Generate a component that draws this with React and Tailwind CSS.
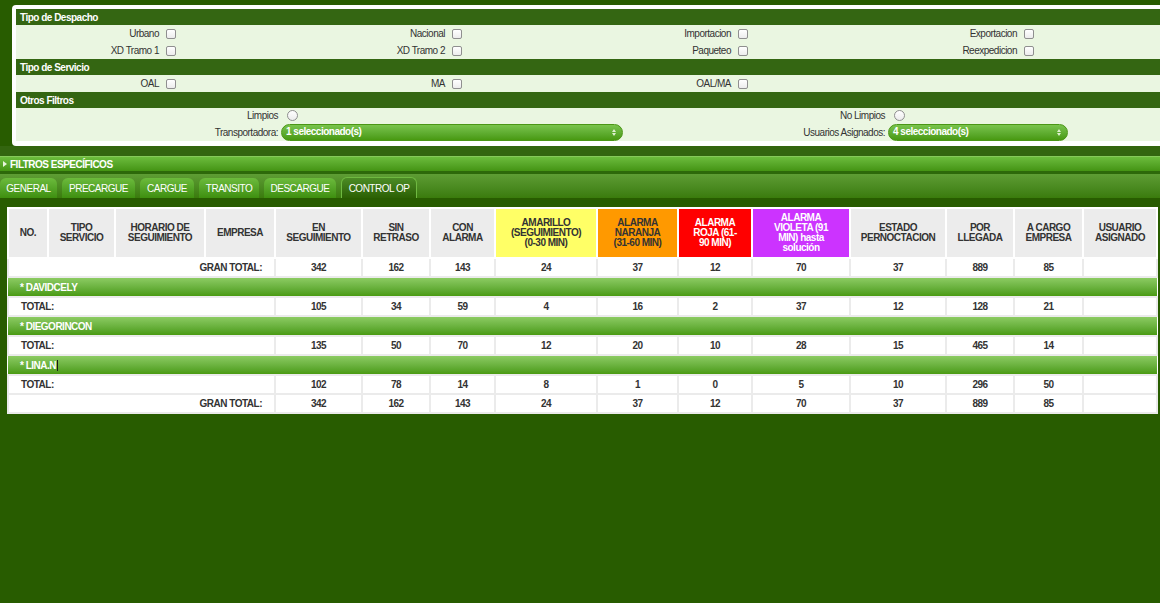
import React from "react";

const font = "font-['Liberation_Sans',Arial,sans-serif]";

const despacho = [
  ["Urbano", "Nacional", "Importacion", "Exportacion"],
  ["XD Tramo 1", "XD Tramo 2", "Paqueteo", "Reexpedicion"],
];

const headers = [
  { w: "w-[40px]", label: ["NO."] },
  { w: "w-[67px]", label: ["TIPO", "SERVICIO"] },
  { w: "w-[90px]", label: ["HORARIO DE", "SEGUIMIENTO"] },
  { w: "w-[70px]", label: ["EMPRESA"] },
  { w: "w-[87px]", label: ["EN", "SEGUIMIENTO"] },
  { w: "w-[68px]", label: ["SIN", "RETRASO"] },
  { w: "w-[65px]", label: ["CON", "ALARMA"] },
  { w: "w-[102px]", label: ["AMARILLO", "(SEGUIMIENTO)", "(0-30 MIN)"], bg: "bg-[#ffff66] text-[#333]" },
  { w: "w-[81px]", label: ["ALARMA", "NARANJA", "(31-60 MIN)"], bg: "bg-[#ff9900] text-[#333]" },
  { w: "w-[74px]", label: ["ALARMA", "ROJA (61-", "90 MIN)"], bg: "bg-[#ff0000] text-white" },
  { w: "w-[98px]", label: ["ALARMA", "VIOLETA (91", "MIN) hasta", "solución"], bg: "bg-[#cc33ff] text-white" },
  { w: "w-[96px]", label: ["ESTADO", "PERNOCTACION"] },
  { w: "w-[68px]", label: ["POR", "LLEGADA"] },
  { w: "w-[69px]", label: ["A CARGO", "EMPRESA"] },
  { w: "w-[74px]", label: ["USUARIO", "ASIGNADO"] },
];

const granTotal = [342, 162, 143, 24, 37, 12, 70, 37, 889, 85, ""];

const groups = [
  { name: "DAVIDCELY", vals: [105, 34, 59, 4, 16, 2, 37, 12, 128, 21, ""] },
  { name: "DIEGORINCON", vals: [135, 50, 70, 12, 20, 10, 28, 15, 465, 14, ""] },
  { name: "LINA.N", vals: [102, 78, 14, 8, 1, 0, 5, 10, 296, 50, ""], caret: true },
];

const tabs = [
  ["GENERAL", "w-[57px]"],
  ["PRECARGUE", "w-[73px]"],
  ["CARGUE", "w-[54px]"],
  ["TRANSITO", "w-[60px]"],
  ["DESCARGUE", "w-[72px]"],
];

const Checkbox = () => (
  <span className="ml-[4px] inline-block w-[10px] h-[10px] rounded-[2px] border border-[#8f8f8f] bg-gradient-to-b from-white to-[#ececec]" />
);

const Radio = () => (
  <span className="ml-[6px] inline-block w-[11px] h-[11px] rounded-full border border-[#8f8f8f] bg-gradient-to-b from-white to-[#ececec]" />
);

const SectionHead = ({ children }) => (
  <div className="h-[16px] bg-[#346612] text-white font-bold text-[10px] tracking-[-0.5px] pl-[4px] flex items-center">
    {children}
  </div>
);

const Select = ({ text, w }) => (
  <div className={`${w} h-[17px] rounded-full border border-[#4b9616] bg-gradient-to-b from-[#79c44c] to-[#48990f] flex items-center justify-between pl-[4px] pr-[6px] text-white font-bold text-[10px] tracking-[-0.5px]`}>
    <span className="-mt-[2px]">{text}</span>
    <svg width="4" height="7" viewBox="0 0 4 7">
      <path d="M2 0 L4 3 L0 3 Z M0 4 L4 4 L2 7 Z" fill="#dff0d0" />
    </svg>
  </div>
);

const td = "border-2 border-[#ebebeb] text-center text-[#333] font-bold text-[10px] tracking-[-0.5px] h-[19px] p-0";

const GroupRow = ({ name, caret }) => (
  <tr>
    <td
      colSpan={15}
      className="h-[20px] p-0 pl-[12px] border-t border-[#3c820e] bg-gradient-to-b from-[#8ccb62] to-[#4a9b10] text-white font-bold text-[10px] tracking-[-0.5px]"
    >
      * {name}
      {caret && <span className="inline-block w-px h-[11px] bg-[#1a1a1a] ml-[1px] align-middle" />}
    </td>
  </tr>
);

const GranRow = () => (
  <tr className="bg-white">
    <td colSpan={4} className={`${td} text-right pr-[12px]`}>GRAN TOTAL:</td>
    {granTotal.map((v, i) => (
      <td key={i} className={td}>{v}</td>
    ))}
  </tr>
);

export default function App() {
  return (
    <div className={`${font} w-full h-[603px] overflow-hidden bg-[#285c00] pt-[5px]`}>
      {/* filtros */}
      <div className="ml-[12px] w-[1220px] bg-white rounded-[4px] p-[4px] pb-[5px]">
        <SectionHead>Tipo de Despacho</SectionHead>
        <div className="bg-[#eaf6e1]">
          {despacho.map((row, r) => (
            <div key={r} className="grid grid-cols-[146px_140px_146px_140px_146px_140px_146px_140px] h-[17px] items-center text-[10px] text-[#333] tracking-[-0.5px]">
              {row.map((l) => (
                <React.Fragment key={l}>
                  <span className="text-right pr-[3px]">{l}</span>
                  <span className="flex items-center"><Checkbox /></span>
                </React.Fragment>
              ))}
            </div>
          ))}
        </div>
        <SectionHead>Tipo de Servicio</SectionHead>
        <div className="bg-[#eaf6e1] grid grid-cols-[146px_140px_146px_140px_146px_140px_146px_140px] h-[17px] items-center text-[10px] text-[#333] tracking-[-0.5px]">
          {["OAL", "MA", "OAL/MA"].map((l) => (
            <React.Fragment key={l}>
              <span className="text-right pr-[3px]">{l}</span>
              <span className="flex items-center"><Checkbox /></span>
            </React.Fragment>
          ))}
        </div>
        <SectionHead>Otros Filtros</SectionHead>
        <div className="bg-[#eaf6e1] text-[10px] text-[#333] tracking-[-0.5px]">
          <div className="grid grid-cols-[265px_342px_265px_1fr] h-[15px] items-center">
            <span className="text-right pr-[3px]">Limpios</span>
            <span className="flex items-center"><Radio /></span>
            <span className="text-right pr-[3px]">No Limpios</span>
            <span className="flex items-center"><Radio /></span>
          </div>
          <div className="grid grid-cols-[265px_342px_265px_1fr] h-[18px] items-center">
            <span className="text-right pr-[3px]">Transportadora:</span>
            <Select text="1 seleccionado(s)" w="w-[342px]" />
            <span className="text-right pr-[3px]">Usuarios Asignados:</span>
            <Select text="4 seleccionado(s)" w="w-[180px]" />
          </div>
        </div>
      </div>

      {/* filtros especificos */}
      <div className="bg-[#33650f] pt-[10px]">
        <div className="h-[15px] border-t border-[#86c95a] bg-gradient-to-b from-[#6cbc3c] to-[#449412] flex items-center text-white font-bold text-[10px] tracking-[-0.5px]">
          <svg width="4" height="6" viewBox="0 0 4 6" className="ml-[3px] mr-[3px]">
            <path d="M0 0 L4 3 L0 6 Z" fill="#e8f5dc" />
          </svg>
          FILTROS ESPECÍFICOS
        </div>
        <div className="h-[3px] bg-[#2d690a]" />
        {/* tabs */}
        <div className="h-[24px] bg-gradient-to-b from-[#5e9d34] to-[#3a7b0c] flex items-end gap-[5px]">
          {tabs.map(([t, w]) => (
            <div
              key={t}
              className={`${w} h-[20px] rounded-t-[6px] bg-gradient-to-b from-[#6cbb3c] to-[#3e8f0e] text-white text-[10px] tracking-[-0.5px] flex items-center justify-center`}
            >
              {t}
            </div>
          ))}
          <div className="w-[76px] h-[21px] rounded-t-[6px] border border-b-0 border-[#6fb941] bg-gradient-to-b from-[#4c8c25] to-[#2b6003] text-white text-[10px] tracking-[-0.5px] flex items-center justify-center">
            CONTROL OP
          </div>
        </div>
      </div>

      {/* tabla */}
      <div className="bg-[#285c00] pt-[9px] px-[7px]">
        <table className="w-[1150px] border-collapse bg-white table-fixed">
          <colgroup>
            {headers.map((h, i) => (
              <col key={i} className={h.w} />
            ))}
          </colgroup>
          <thead>
            <tr>
              {headers.map((h, i) => (
                <th
                  key={i}
                  className={`h-[50px] p-0 border-2 border-white ${h.bg || "bg-[#ececec] text-[#333]"} font-bold text-[10px] leading-[10px] tracking-[-0.5px] text-center align-middle`}
                >
                  {h.label.map((l, j) => (
                    <div key={j}>{l}</div>
                  ))}
                </th>
              ))}
            </tr>
          </thead>
          <tbody>
            <GranRow />
            {groups.map((g) => (
              <React.Fragment key={g.name}>
                <GroupRow name={g.name} caret={g.caret} />
                <tr className="bg-white">
                  <td colSpan={4} className={`${td} text-left pl-[12px]`}>TOTAL:</td>
                  {g.vals.map((v, i) => (
                    <td key={i} className={td}>{v}</td>
                  ))}
                </tr>
              </React.Fragment>
            ))}
            <GranRow />
          </tbody>
        </table>
      </div>
    </div>
  );
}
